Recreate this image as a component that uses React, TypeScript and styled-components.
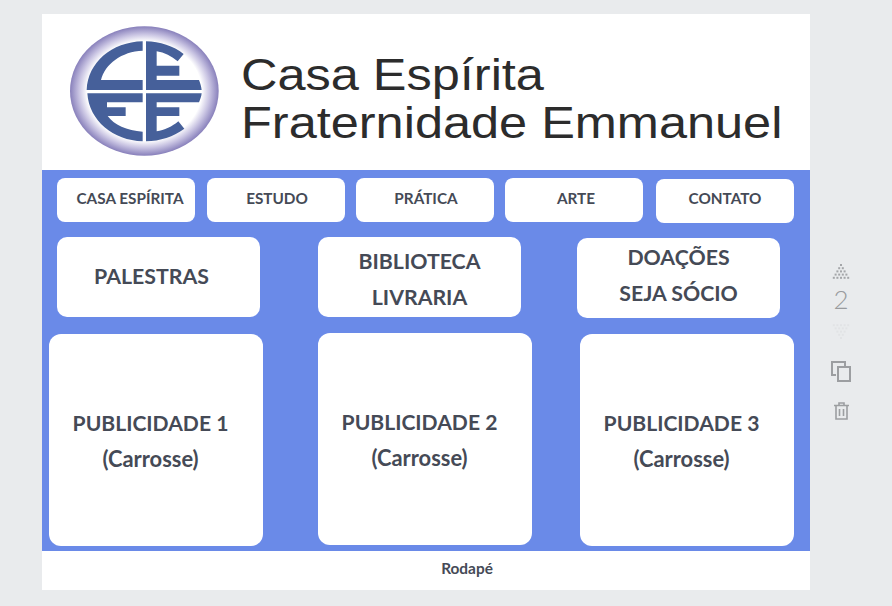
import React from 'react';
import styled, { createGlobalStyle } from 'styled-components';

const Global = createGlobalStyle`
    html, body {
        margin:0;
        padding:0;
        background:#e9ebed;
    }
`
const Page = styled.div`
    display:flex;
    width:892px;
    height:606px;
    padding:14px 0 0 42px;
    box-sizing:border-box;
    overflow:hidden;
    font-family:Lato, "Noto Sans", sans-serif;
    font-weight:700;
    color:#454a56;
`
const Canvas = styled.div`
    display:flex;
    flex-direction:column;
    width:768px;
    height:576px;
    background:#fff;
`
const Header = styled.header`
    display:flex;
    align-items:flex-start;
    height:156px;
    padding:12px 0 0 28px;
    box-sizing:border-box;
`
const Logo = styled.svg`
    width:149px;
    height:130px;
    flex:none;
`
const Title = styled.h1`
    margin:25px 0 0 22px;
    font-family:"Liberation Sans", Arial, sans-serif;
    font-size:44px;
    line-height:48px;
    font-weight:400;
    color:#2c2c2c;
    white-space:nowrap;
    transform:scaleX(1.147);
    transform-origin:left top;
`
const Panel = styled.main`
    height:381px;
    padding-top:8px;
    box-sizing:border-box;
    background:#6a8ae8;
`
interface RowProps{
    $top:number
}
const Row = styled.div<RowProps>`
    display:flex;
    align-items:flex-start;
    margin-top:${props=>props.$top}px;
`
interface CardProps{
    $left:number
    $top?:number
    $shift?:number
    $in?:number
    $down?:number
    $up?:number
}
const Card = styled.div<CardProps>`
    display:flex;
    flex-direction:column;
    align-items:center;
    justify-content:center;
    flex:none;
    box-sizing:border-box;
    background:#fff;
    text-align:center;
    margin-left:${props=>props.$left}px;
    margin-top:${props=>props.$top || 0}px;
    padding-left:${props=>props.$in || 0}px;
    padding-right:${props=>props.$shift || 0}px;
    padding-top:${props=>props.$down || 0}px;
    padding-bottom:${props=>props.$up || 0}px;
`
const NavCard = styled(Card)`
    width:138px;
    height:44px;
    border-radius:8px;
    font-size:15.3px;
`
const MenuCard = styled(Card)`
    width:203px;
    height:80px;
    border-radius:10px;
    font-size:21.3px;
    line-height:36px;
`
const AdCard = styled(Card)`
    width:214px;
    height:212px;
    border-radius:12px;
    font-size:21.1px;
    line-height:36px;
`
const AdNote = styled.span`
    font-size:21.9px;
`
const Footer = styled.footer`
    display:flex;
    justify-content:center;
    height:39px;
    padding:8px 0 0 82px;
    box-sizing:border-box;
    font-size:15.4px;
    line-height:18px;
`
const Side = styled.aside`
    display:flex;
    flex-direction:column;
    align-items:center;
    width:62px;
    padding-top:250px;
    color:#999b9e;
`
const Order = styled.div`
    font-size:26px;
    line-height:28px;
    font-weight:300;
    margin:6px 0 11px;
`
const IconSvg = styled.svg`
    display:block;
    flex:none;
`

const Dots = ({down}:{down?:boolean}) => {
    const dots = []
    for(let row = 0; row < 5; row++){
        for(let i = 0; i <= row; i++){
            const x = 9 + (i - row / 2) * 3.6
            const y = down ? 14 - row * 3.2 : 1 + row * 3.2
            dots.push(<rect key={`${row}-${i}`} x={x - 1} y={y - 1} width="2" height="2" />)
        }
    }
    return(
        <IconSvg width="18" height="15" viewBox="0 0 18 15" fill={down ? '#e1e3e5' : '#a4a6a9'}>{dots}</IconSvg>
    )
}

const navItems = [
    {label:'CASA ESPÍRITA', left:15, inset:8, up:4},
    {label:'ESTUDO', left:12, inset:2, up:4},
    {label:'PRÁTICA', left:11, inset:2, up:4},
    {label:'ARTE', left:11, inset:4, up:4},
    {label:'CONTATO', left:13, top:1, inset:0, up:6},
]

const ads = [
    {n:1, left:7, top:1},
    {n:2, left:55, top:0},
    {n:3, left:48, top:1},
]

const App = () => {
    return(
        <Page>
            <Global />
            <Canvas>
                <Header>
                    <Logo viewBox="85 37 447 388">
                        <defs>
                            <radialGradient id="ring" cx="50%" cy="50%" r="50%">
                                <stop offset="0.77" stopColor="#ffffff" />
                                <stop offset="0.88" stopColor="#c8c3e2" />
                                <stop offset="1" stopColor="#8880bb" />
                            </radialGradient>
                        </defs>
                        <ellipse cx="308" cy="231" rx="223" ry="194" fill="url(#ring)" />
                        <g fill="#46609a">
                            <path d="M303 82 C210 84 138 146 135 228 L303 228 L303 198 L178 198 C190 150 240 112 303 110 Z" />
                            <path d="M313 82 C355 83 395 96 426 120 L408 142 C390 126 368 116 345 112 L345 155 L413 155 L413 185 L345 185 L345 198 L472 198 C476 208 479 218 480 228 L313 228 Z" />
                            <path d="M137 238 L303 238 L303 265 L196 265 L196 280 L252 280 L252 306 L198 306 C216 332 256 350 303 353 L303 382 C215 380 142 320 137 238 Z" />
                            <path d="M313 238 L480 238 C479 248 476 256 472 265 L345 265 L345 280 L413 280 L413 306 L345 306 L345 352 C368 348 392 338 410 322 L428 344 C396 368 355 381 313 382 Z" />
                        </g>
                    </Logo>
                    <Title>Casa Espírita<br />Fraternidade Emmanuel</Title>
                </Header>
                <Panel>
                    <Row $top={0}>
                        {navItems.map(item=>(
                            <NavCard key={item.label} $left={item.left} $top={item.top} $in={item.inset} $up={item.up}>{item.label}</NavCard>
                        ))}
                    </Row>
                    <Row $top={14}>
                        <MenuCard $left={15} $shift={14} $up={2}>PALESTRAS</MenuCard>
                        <MenuCard $left={58} $down={3}><span>BIBLIOTECA</span><span>LIVRARIA</span></MenuCard>
                        <MenuCard $left={56} $top={1} $up={7}><span>DOAÇÕES</span><span>SEJA SÓCIO</span></MenuCard>
                    </Row>
                    <Row $top={15}>
                        {ads.map(ad=>(
                            <AdCard key={ad.n} $left={ad.left} $top={ad.top} $shift={11} $down={2}>
                                <span>PUBLICIDADE {ad.n}</span>
                                <AdNote>(Carrosse)</AdNote>
                            </AdCard>
                        ))}
                    </Row>
                </Panel>
                <Footer>Rodapé</Footer>
            </Canvas>
            <Side>
                <Dots />
                <Order>2</Order>
                <Dots down />
                <IconSvg style={{marginTop:22}} width="20" height="21" viewBox="0 0 20 21" fill="none" stroke="#9c9ea1" strokeWidth="2">
                    <path d="M5 14 H1 V1 H14 V5" />
                    <rect x="7" y="6" width="12" height="14" />
                </IconSvg>
                <IconSvg style={{marginTop:20}} width="15" height="18" viewBox="0 0 15 18" fill="none" stroke="#9c9ea1" strokeWidth="1.6">
                    <path d="M0 3.5 H15 M5 3.5 V1 H10 V3.5" />
                    <path d="M2 3.5 V17 H13 V3.5" />
                    <path d="M5.5 7 V14 M9.5 7 V14" />
                </IconSvg>
            </Side>
        </Page>
    )
}

export default App;
